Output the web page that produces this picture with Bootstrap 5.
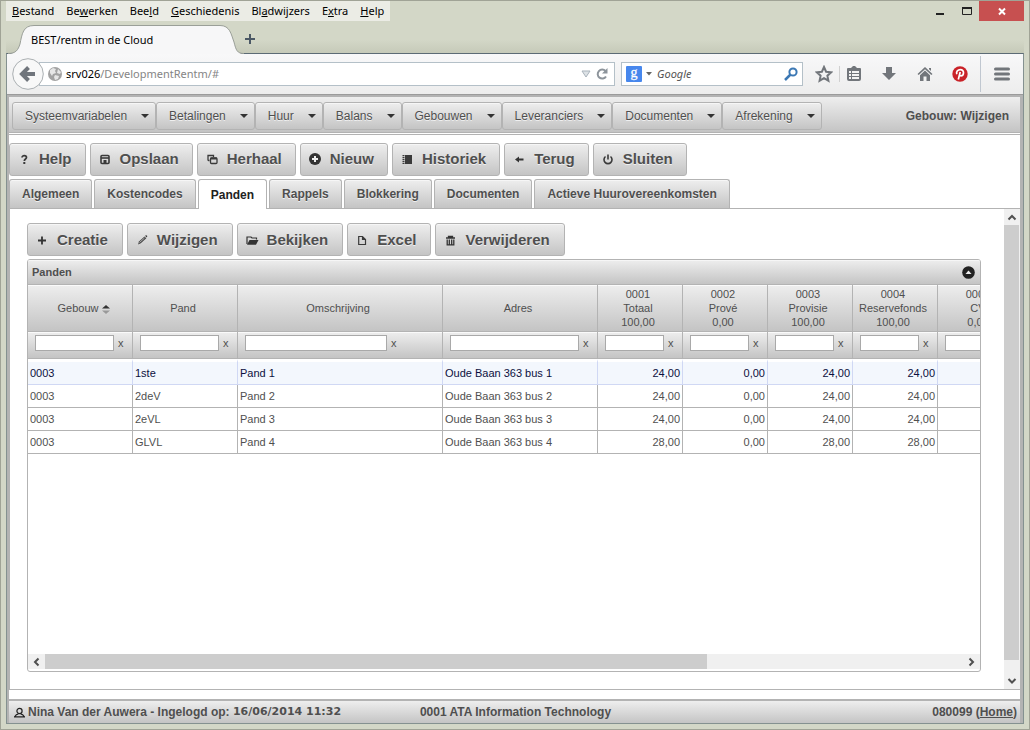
<!DOCTYPE html>
<html lang="nl">
<head>
<meta charset="utf-8">
<meta name="viewport" content="width=device-width, initial-scale=1">
<title>BEST/rentm in de Cloud</title>
<link href="https://cdn.jsdelivr.net/npm/bootstrap@5.3.0/dist/css/bootstrap.min.css" rel="stylesheet">
<style>
:root{--line:#b3b3b3;--ink:#4f4f4f;--grad:linear-gradient(#eeeeee,#c4c4c4)}
body{font-family:"Liberation Sans",Arial,sans-serif;font-size:12px;line-height:16px;color:var(--ink);background:#d3d7c7}
button{font:inherit;color:inherit}
.win{height:100vh;border:1px solid #a0a396;padding:0 5px 5px;overflow:hidden}
.chrome{font-family:"Noto Sans","Open Sans",sans-serif;color:#000}
.chrome button,.icon-btn{background:none;border:0;padding:0}
.strip{background:linear-gradient(#d3d7c7 75%,#c6cab9)}
.menus{background:#ebece5;height:20px;padding:0 6px;gap:12px;font-size:11px}
.wbtn{width:27px;height:20px}
.wclose{width:45px;height:20px;background:#c75050!important}
.tabs-row{height:28px;margin-top:4px}
.btab{width:236px;height:29px;margin-left:2px;z-index:2;font-size:11px}
.btab svg{position:absolute;inset:0}
.btab span{position:relative;padding-left:23px}
.frame{border:1px solid #849190;border-top-color:#5c6b75;min-height:0}
.tools{height:41px;background:linear-gradient(#f8f8f9,#ededed);border-bottom:1px solid #9b9b9b;font-size:11px;padding:0 13px 0 5px}
.back{width:32px;height:32px;z-index:1}
.fieldbox{height:24px;background:#fff;border:1px solid #b4c0c8}
.url{margin-left:-5px;padding:0 4px 0 8px}
.search{width:182px;margin-left:6px;padding:0 4px}
.fieldbox svg{flex:none}
.fieldbox input{border:0;outline:0;padding:0;background:none;min-width:0}
.search input{padding-left:2px;color:#555}
.url-text{left:26px;pointer-events:none;color:#858585}
.url-text b{font-weight:400;color:#000}
.icons{margin-left:12px}
.thin{height:16px;border-left:1px solid #d0d0d0;margin:0 5px 0 6px}
.gap-w{margin-left:17px}
.gap-x{margin-left:18px}
.tall{height:36px;border-left:1px solid #c0c7d0;margin:0 13px 0 12px}
.page{border:2px solid var(--line);border-right-width:3px;border-bottom:0;background:#fff;min-height:0}
.apphead{height:36px;background:var(--grad);border-bottom:1px solid var(--line);padding:5px 11px 0 3px}
.screen-name{line-height:28px}
.gbtn{background:var(--grad);border:1px solid var(--line);border-radius:3px;box-shadow:inset 0 1px 0 #f6f6f6;text-shadow:0 1px 0 rgba(255,255,255,.7);color:var(--ink)}
.mitem{height:28px;padding:0 6px 0 12px;gap:14px}
.caret{width:0;height:0;border:4px solid transparent;border-top-color:#333;border-bottom:0}
.abtn{height:33px;font-size:15px;font-weight:700;padding:0 14px 0 6px;gap:7px;line-height:20px}
.abtn svg{width:16px;height:16px;flex:none}
.subline{border-top:1px solid var(--line);margin-top:1px;padding-top:8px}
.subline .abtn{padding-right:13px;padding-bottom:2px}
.ptabs{margin-top:3px;gap:2px}
.ptab{height:29px;padding:0 12px;font-weight:700;border-radius:3px 3px 0 0;border-bottom:0}
.ptab.on{background:#fff;color:#222;height:30px;margin-bottom:-1px;box-shadow:none;z-index:1}
.pane{border:1px solid var(--line);border-right:0;min-height:0}
.inner{padding:14px 23px 17px 17px;min-width:0}
.vbar{width:16px;background:#f0f0f0}
.arrow{height:16px;width:16px;display:block;flex:none}
.hbar .arrow:first-child{width:17px}
.grid-box{margin-top:3px;border:1px solid var(--line);border-radius:3px;min-height:0;overflow:hidden}
.ghead{height:25px;background:var(--grad);border-bottom:1px solid var(--line);padding:0 5px 0 4px;font-size:11px;font-weight:700;box-shadow:inset 0 1px 0 #f6f6f6}
.gt{table-layout:fixed;width:995px;border-collapse:separate;border-spacing:0;font-size:11px;line-height:14px}
.gt th{font-weight:400;text-align:center;background:var(--grad);border-right:1px solid var(--line);border-bottom:1px solid var(--line);height:47px;padding:0 4px 0 0;box-shadow:inset 0 1px 0 #fafafa;vertical-align:middle}
.gt .filters th{height:27px;text-align:left;padding:0 0 0 7px}
.gt th input{height:16px;border:1px solid #a9a9a9;padding:0;background:#fff;width:79px;vertical-align:middle;border-radius:0}
.gt th.w-oms input{width:142px}
.gt th.w-adr input{width:129px}
.gt th.w-num input{width:59px}
.gt th button{background:none;border:0;padding:0;vertical-align:middle}
.gt th .fl{display:flex;gap:4px;height:20px;line-height:16px}
.gt th .fl button{height:16px}
.gt td{height:23px;padding:0 2px;border-right:1px solid var(--line);border-bottom:1px solid var(--line);vertical-align:middle;white-space:nowrap}
.gt .sel td{height:26px;background:#f3f7fd;background-clip:padding-box;border-top:3px solid #fff;border-right-color:#d0d8f4;border-bottom-color:#d0d8f4;color:#0c1040}
.gt .r{text-align:right}
.c1{width:105px}.c3{width:205px}.c4{width:155px}.c5{width:85px}
.hbar{height:15px;background:#f0f0f0;margin-bottom:2px}
.thumb{background:#cdcdcd}
.hbar .thumb{width:72%}
.vbar .thumb{height:97%;width:15px}
.foot{border-top:2px solid var(--line);margin-top:9px;height:24px;background:var(--grad);font-weight:700;padding:0 3px 0 5px}
.foot a{color:inherit}
.foot svg{margin-right:3px}
.stamp{font-family:"DejaVu Sans",sans-serif;font-size:11px}
</style>
</head>
<body>
<div class="win d-flex flex-column">
  <header class="chrome strip">
    <div class="d-flex justify-content-between align-items-start">
      <nav class="menus d-flex align-items-center" aria-label="Menubalk">
        <button><u>B</u>estand</button><button>Be<u>w</u>erken</button><button>Bee<u>l</u>d</button><button><u>G</u>eschiedenis</button><button>Bl<u>a</u>dwijzers</button><button>E<u>x</u>tra</button><button><u>H</u>elp</button>
      </nav>
      <div class="d-flex">
        <button class="wbtn d-flex" aria-label="Minimaliseren"><svg width="27" height="20"><path d="M11 12h8v2h-8z" fill="#222"/></svg></button>
        <button class="wbtn d-flex" aria-label="Maximaliseren"><svg width="27" height="20"><path d="M10.500 6.500h9v7h-9z" fill="none" stroke="#222"/><path d="M10 6h10v2H10z" fill="#222"/></svg></button>
        <button class="wclose d-flex" aria-label="Sluiten"><svg width="45" height="20"><path d="M20 7.500l6 6M26 7.500l-6 6" stroke="#fff" stroke-width="2"/></svg></button>
      </div>
    </div>
    <div class="tabs-row d-flex align-items-center">
      <div class="btab position-relative d-flex align-items-center align-self-start">
        <svg width="236" height="29" aria-hidden="true"><path d="M0 29C8 28.500 10 25 12 19C14 9 15 .5 26 .5H212C222 .5 223 9 226 17C228 25 229 28.500 236 29z" fill="#f7f7f8"/><path d="M0 28.500C8 28.500 10 25 12 19C14 9 15 .5 26 .5H212C222 .5 223 9 226 17C228 25 229 28.500 236 28.500" fill="none" stroke="#9a9f98"/></svg>
        <span>BEST/rentm in de Cloud</span>
      </div>
      <button class="d-flex" aria-label="Nieuw tabblad"><svg width="12" height="12"><path d="M6 1v10M1 6h10" stroke="#4b5865" stroke-width="2"/></svg></button>
    </div>
  </header>

  <div class="frame d-flex flex-column flex-grow-1">
    <div class="chrome tools d-flex align-items-center">
      <button class="back d-flex position-relative" aria-label="Terug"><svg width="32" height="32"><circle cx="16" cy="16" r="15.300" fill="#f8f8f8" stroke="#aaafb2"/><path d="M16.500 9.500L10 16l6.500 6.500M10.500 16H23" fill="none" stroke="#70757c" stroke-width="4"/></svg></button>
      <div class="url fieldbox d-flex align-items-center flex-grow-1 position-relative">
        <svg width="14" height="14" aria-hidden="true"><circle cx="7" cy="7" r="7" fill="#a2a2a2"/><path d="M2 3l3-2 3 1-1 2 1 2-3 1-1 2-2-3zM10 2l3 3-1 2-3-1zM7 8l4 1-1 3-3 1-1-3z" fill="#e6e6e6"/></svg>
        <input class="flex-grow-1" type="text" aria-label="Adres">
        <span class="url-text position-absolute"><b>srv026</b>/DevelopmentRentm/#</span>
        <button class="d-flex" aria-label="Geschiedenis tonen"><svg width="16" height="12"><path d="M4 3h8l-4 6z" fill="#dde2e6" stroke="#a9b3bb"/></svg></button>
        <button class="d-flex" aria-label="Vernieuwen"><svg width="16" height="16"><path d="M12 10.500A4.500 4.500 0 1 1 11.500 5" fill="none" stroke="#8d949b" stroke-width="2"/><path d="M13.500 2v5.500H8z" fill="#8d949b"/></svg></button>
      </div>
      <div class="search fieldbox d-flex align-items-center">
        <svg width="16" height="16" overflow="visible" aria-hidden="true"><rect width="16" height="16" rx="1" fill="#4787ed"/><text x="8" y="11" text-anchor="middle" font-family="Liberation Serif" font-size="14" fill="#fff" stroke="#fff" stroke-width=".3">g</text></svg>
        <svg width="13" height="8" aria-hidden="true"><path d="M4 2h6L7 5.500z" fill="#666"/></svg>
        <input class="flex-grow-1 fst-italic" type="text" value="Google" aria-label="Zoeken met Google">
        <button class="d-flex" aria-label="Zoeken"><svg width="14" height="14"><circle cx="9" cy="5" r="3.600" fill="#fff" stroke="#3c78b4" stroke-width="2"/><path d="M6.500 7.500L1 13" stroke="#3c78b4" stroke-width="2.500"/></svg></button>
      </div>
      <div class="icons d-flex align-items-center flex-shrink-0">
        <button class="d-flex" aria-label="Bladwijzer"><svg width="18" height="18"><path d="M9 2l2.100 4.700 5 .6-3.700 3.400 1 5L9 13.200l-4.400 2.500 1-5L1.900 7.300l5-.6z" fill="none" stroke="#72767b" stroke-width="2"/></svg></button>
        <span class="thin"></span>
        <button class="d-flex" aria-label="Bladwijzers"><svg width="18" height="18"><path d="M3 3h3l2-2h2l2 2h3q1 0 1 1v10q0 2-2 2H4q-2 0-2-2V4q0-1 1-1z" fill="#72767b"/><path d="M4 6h2v2H4zM7 6h7v2H7zM4 9h2v2H4zM7 9h7v2H7zM4 12h2v2H4zM7 12h7v2H7z" fill="#f2f2f2"/></svg></button>
        <button class="d-flex gap-w" aria-label="Downloads"><svg width="18" height="18"><path d="M6 2h6v6h4l-7 7-7-7h4z" fill="#72767b"/></svg></button>
        <button class="d-flex gap-x" aria-label="Startpagina"><svg width="18" height="18"><path d="M9 2l7.500 7-1.200 1.100L9 4.300 2.700 10.100 1.500 9zM9 5.600l5 4.600V16h-3.500v-4.500h-3V16H4v-5.800zM13 3h2v3l-2-1.800z" fill="#72767b"/></svg></button>
        <button class="d-flex gap-x" aria-label="Pinterest"><svg width="16" height="16"><circle cx="8" cy="8" r="7.700" fill="#c92228"/><path d="M6.300 13.500L8.200 6M4.800 8.300C3.800 5.500 6 3.600 8.300 3.600c4.600 0 3.700 6.200.6 6.200-.9 0-1.300-.5-1.500-.9" fill="none" stroke="#fff" stroke-width="1.700"/></svg></button>
        <span class="tall"></span>
        <button class="d-flex" aria-label="Menu openen"><svg width="16" height="14"><path d="M1.500 2h13M1.500 7h13M1.500 12h13" stroke="#72767b" stroke-width="3" stroke-linecap="round"/></svg></button>
      </div>
    </div>

    <div class="page d-flex flex-column flex-grow-1">
      <div class="apphead d-flex justify-content-between">
        <nav class="d-flex" aria-label="Hoofdmenu">
          <button class="gbtn mitem d-flex align-items-center">Systeemvariabelen<i class="caret"></i></button>
          <button class="gbtn mitem d-flex align-items-center">Betalingen<i class="caret"></i></button>
          <button class="gbtn mitem d-flex align-items-center">Huur<i class="caret"></i></button>
          <button class="gbtn mitem d-flex align-items-center">Balans<i class="caret"></i></button>
          <button class="gbtn mitem d-flex align-items-center">Gebouwen<i class="caret"></i></button>
          <button class="gbtn mitem d-flex align-items-center">Leveranciers<i class="caret"></i></button>
          <button class="gbtn mitem d-flex align-items-center">Documenten<i class="caret"></i></button>
          <button class="gbtn mitem d-flex align-items-center">Afrekening<i class="caret"></i></button>
        </nav>
        <strong class="screen-name">Gebouw: Wijzigen</strong>
      </div>
      <div class="subline d-flex gap-1">
        <button class="gbtn abtn d-flex align-items-center"><svg viewBox="0 0 16 16"><path d="M6 6.500C6 4 10.500 4 10.500 6.500 10.500 8 8.300 8 8.300 10" fill="none" stroke="#3a3a3a" stroke-width="1.700"/><path d="M7.300 11h2v2h-2z" fill="#3a3a3a"/></svg>Help</button>
        <button class="gbtn abtn d-flex align-items-center"><svg viewBox="0 0 16 16"><rect x="4" y="4.500" width="8" height="8" rx="1" fill="none" stroke="#3a3a3a" stroke-width="1.600"/><path d="M4 7h8" stroke="#3a3a3a" stroke-width="1.600"/><path d="M6.500 9h3v3.500h-3z" fill="#3a3a3a"/></svg>Opslaan</button>
        <button class="gbtn abtn d-flex align-items-center"><svg viewBox="0 0 16 16"><path d="M5.500 9.500H4.500Q4 9.500 4 9V4.500H9.500V6" fill="none" stroke="#3a3a3a" stroke-width="1.300"/><rect x="6.500" y="7" width="6.500" height="5.500" rx="1" fill="none" stroke="#3a3a3a" stroke-width="1.300"/><path d="M6.500 7.500H13" stroke="#3a3a3a" stroke-width="2"/></svg>Herhaal</button>
        <button class="gbtn abtn d-flex align-items-center"><svg viewBox="0 0 16 16"><circle cx="8" cy="8" r="6" fill="#333"/><path d="M8 5v6M5 8h6" stroke="#eee" stroke-width="2"/></svg>Nieuw</button>
        <button class="gbtn abtn d-flex align-items-center"><svg viewBox="0 0 16 16"><path d="M6 4h7v9H6z" fill="#3a3a3a"/><path d="M4.500 4v9" stroke="#3a3a3a" stroke-width="2" stroke-dasharray="1.200 .8"/></svg>Historiek</button>
        <button class="gbtn abtn d-flex align-items-center"><svg viewBox="0 0 16 16"><path d="M4 8.500l4-3v2h4.500v2H8v2z" fill="#333"/></svg>Terug</button>
        <button class="gbtn abtn d-flex align-items-center"><svg viewBox="0 0 16 16"><path d="M5.500 5.500a4 4 0 1 0 5 0M8 3.500v5" fill="none" stroke="#3a3a3a" stroke-width="1.600"/></svg>Sluiten</button>
      </div>
      <div class="ptabs d-flex" role="tablist">
        <button class="gbtn ptab" role="tab">Algemeen</button>
        <button class="gbtn ptab" role="tab">Kostencodes</button>
        <button class="gbtn ptab on position-relative" role="tab" aria-selected="true">Panden</button>
        <button class="gbtn ptab" role="tab">Rappels</button>
        <button class="gbtn ptab" role="tab">Blokkering</button>
        <button class="gbtn ptab" role="tab">Documenten</button>
        <button class="gbtn ptab" role="tab">Actieve Huurovereenkomsten</button>
      </div>
      <main class="pane d-flex flex-grow-1">
        <div class="inner d-flex flex-column flex-grow-1">
          <div class="d-flex gap-1">
            <button class="gbtn abtn d-flex align-items-center"><svg viewBox="0 0 16 16"><path d="M8 4.500v8M4 8.500h8" stroke="#333" stroke-width="1.800"/></svg>Creatie</button>
            <button class="gbtn abtn d-flex align-items-center"><svg viewBox="0 0 16 16"><path d="M4 12.500l1-3 5.500-5 1.800 1.800-5.500 5z" fill="#444"/><path d="M5.500 10.500l5-4.500" stroke="#ccc" stroke-width=".8"/><path d="M11 3.800l1.800 1.800.5-1.500-1-.8z" fill="#333"/></svg>Wijzigen</button>
            <button class="gbtn abtn d-flex align-items-center"><svg viewBox="0 0 16 16"><path d="M3 12V5h4l1 1h4.500v1.500" fill="none" stroke="#333" stroke-width="1.200"/><path d="M5.500 8H14.500L12 12.800H3z" fill="#333"/></svg>Bekijken</button>
            <button class="gbtn abtn d-flex align-items-center"><svg viewBox="0 0 16 16"><path d="M4.700 4.500H8.500L11.500 7.500V12.500H4.700zM8.500 4.500V7.500H11.500" fill="none" stroke="#3a3a3a" stroke-width="1.200"/></svg>Excel</button>
            <button class="gbtn abtn d-flex align-items-center"><svg viewBox="0 0 16 16"><path d="M4 6h9M6.500 5.500V4.500h4v1M5.200 7.500v5.300h6.600V7.500M7.300 7.500v5M9.700 7.500v5" fill="none" stroke="#333" stroke-width="1.300"/></svg>Verwijderen</button>
          </div>
          <section class="grid-box d-flex flex-column flex-grow-1">
            <div class="ghead d-flex align-items-center justify-content-between flex-shrink-0">Panden
              <button class="icon-btn d-flex" aria-label="Inklappen"><svg width="13" height="13"><circle cx="6.500" cy="6.500" r="6.300" fill="#222"/><path d="M3.500 8h6L6.500 4.500z" fill="#eee"/></svg></button>
            </div>
            <div class="flex-grow-1 overflow-hidden">
              <table class="gt">
                <colgroup><col class="c1"><col class="c1"><col class="c3"><col class="c4"><col class="c5"><col class="c5"><col class="c5"><col class="c5"><col class="c5"></colgroup>
                <thead>
                  <tr><th class="ps-2 pe-0">Gebouw <svg width="9" height="10" class="align-middle"><path d="M0 4.500h8L4 1z" fill="#333"/><path d="M0 6.500h8L4 10z" fill="#999"/></svg></th><th>Pand</th><th>Omschrijving</th><th>Adres</th><th>0001<br>Totaal<br>100,00</th><th>0002<br>Prové<br>0,00</th><th>0003<br>Provisie<br>100,00</th><th>0004<br>Reservefonds<br>100,00</th><th>0005<br>CV<br>0,00</th></tr>
                  <tr class="filters">
                    <th><div class="fl"><input type="text" aria-label="Filter Gebouw"><button>x</button></div></th>
                    <th><div class="fl"><input type="text" aria-label="Filter Pand"><button>x</button></div></th>
                    <th class="w-oms"><div class="fl"><input type="text" aria-label="Filter Omschrijving"><button>x</button></div></th>
                    <th class="w-adr"><div class="fl"><input type="text" aria-label="Filter Adres"><button>x</button></div></th>
                    <th class="w-num"><div class="fl"><input type="text" aria-label="Filter Totaal"><button>x</button></div></th>
                    <th class="w-num"><div class="fl"><input type="text" aria-label="Filter Prové"><button>x</button></div></th>
                    <th class="w-num"><div class="fl"><input type="text" aria-label="Filter Provisie"><button>x</button></div></th>
                    <th class="w-num"><div class="fl"><input type="text" aria-label="Filter Reservefonds"><button>x</button></div></th>
                    <th class="w-num"><div class="fl"><input type="text" aria-label="Filter CV"></div></th>
                  </tr>
                </thead>
                <tbody>
                  <tr class="sel"><td>0003</td><td>1ste</td><td>Pand 1</td><td>Oude Baan 363 bus 1</td><td class="r">24,00</td><td class="r">0,00</td><td class="r">24,00</td><td class="r">24,00</td><td></td></tr>
                  <tr><td>0003</td><td>2deV</td><td>Pand 2</td><td>Oude Baan 363 bus 2</td><td class="r">24,00</td><td class="r">0,00</td><td class="r">24,00</td><td class="r">24,00</td><td></td></tr>
                  <tr><td>0003</td><td>2eVL</td><td>Pand 3</td><td>Oude Baan 363 bus 3</td><td class="r">24,00</td><td class="r">0,00</td><td class="r">24,00</td><td class="r">24,00</td><td></td></tr>
                  <tr><td>0003</td><td>GLVL</td><td>Pand 4</td><td>Oude Baan 363 bus 4</td><td class="r">28,00</td><td class="r">0,00</td><td class="r">28,00</td><td class="r">28,00</td><td></td></tr>
                </tbody>
              </table>
            </div>
            <div class="hbar d-flex flex-shrink-0">
              <svg class="arrow" width="16" height="16"><path d="M10.500 4.500L7 8l3.500 3.500" fill="none" stroke="#505050" stroke-width="2"/></svg>
              <div class="flex-grow-1"><div class="thumb h-100"></div></div>
              <svg class="arrow" width="16" height="16"><path d="M5.500 4.500L9 8l-3.500 3.500" fill="none" stroke="#505050" stroke-width="2"/></svg>
            </div>
          </section>
        </div>
        <div class="vbar d-flex flex-column">
          <svg class="arrow" width="16" height="16"><path d="M4.500 10.500L8 7l3.500 3.500" fill="none" stroke="#505050" stroke-width="2"/></svg>
          <div class="flex-grow-1"><div class="thumb"></div></div>
          <svg class="arrow" width="16" height="16"><path d="M4.500 6L8 9.500 11.500 6" fill="none" stroke="#505050" stroke-width="2"/></svg>
        </div>
      </main>
      <footer class="foot row g-0 align-items-center flex-shrink-0">
        <div class="col-4 d-flex align-items-center text-nowrap"><svg width="11" height="11"><circle cx="5.500" cy="4" r="2.600" fill="none" stroke="#222" stroke-width="1.200"/><path d="M.7 9.800Q2 7 4.500 6.800M10.300 9.800Q9 7 6.500 6.800M0 9.800h11" fill="none" stroke="#222" stroke-width="1.200"/></svg>Nina Van der Auwera - Ingelogd op:&nbsp;<span class="stamp">16/06/2014 11:32</span></div>
        <div class="col-4 text-center">0001 ATA Information Technology</div>
        <div class="col-4 text-end">080099 (<a href="#">Home</a>)</div>
      </footer>
    </div>
  </div>
</div>
<script src="https://cdn.jsdelivr.net/npm/bootstrap@5.3.0/dist/js/bootstrap.bundle.min.js"></script>
</body>
</html>
